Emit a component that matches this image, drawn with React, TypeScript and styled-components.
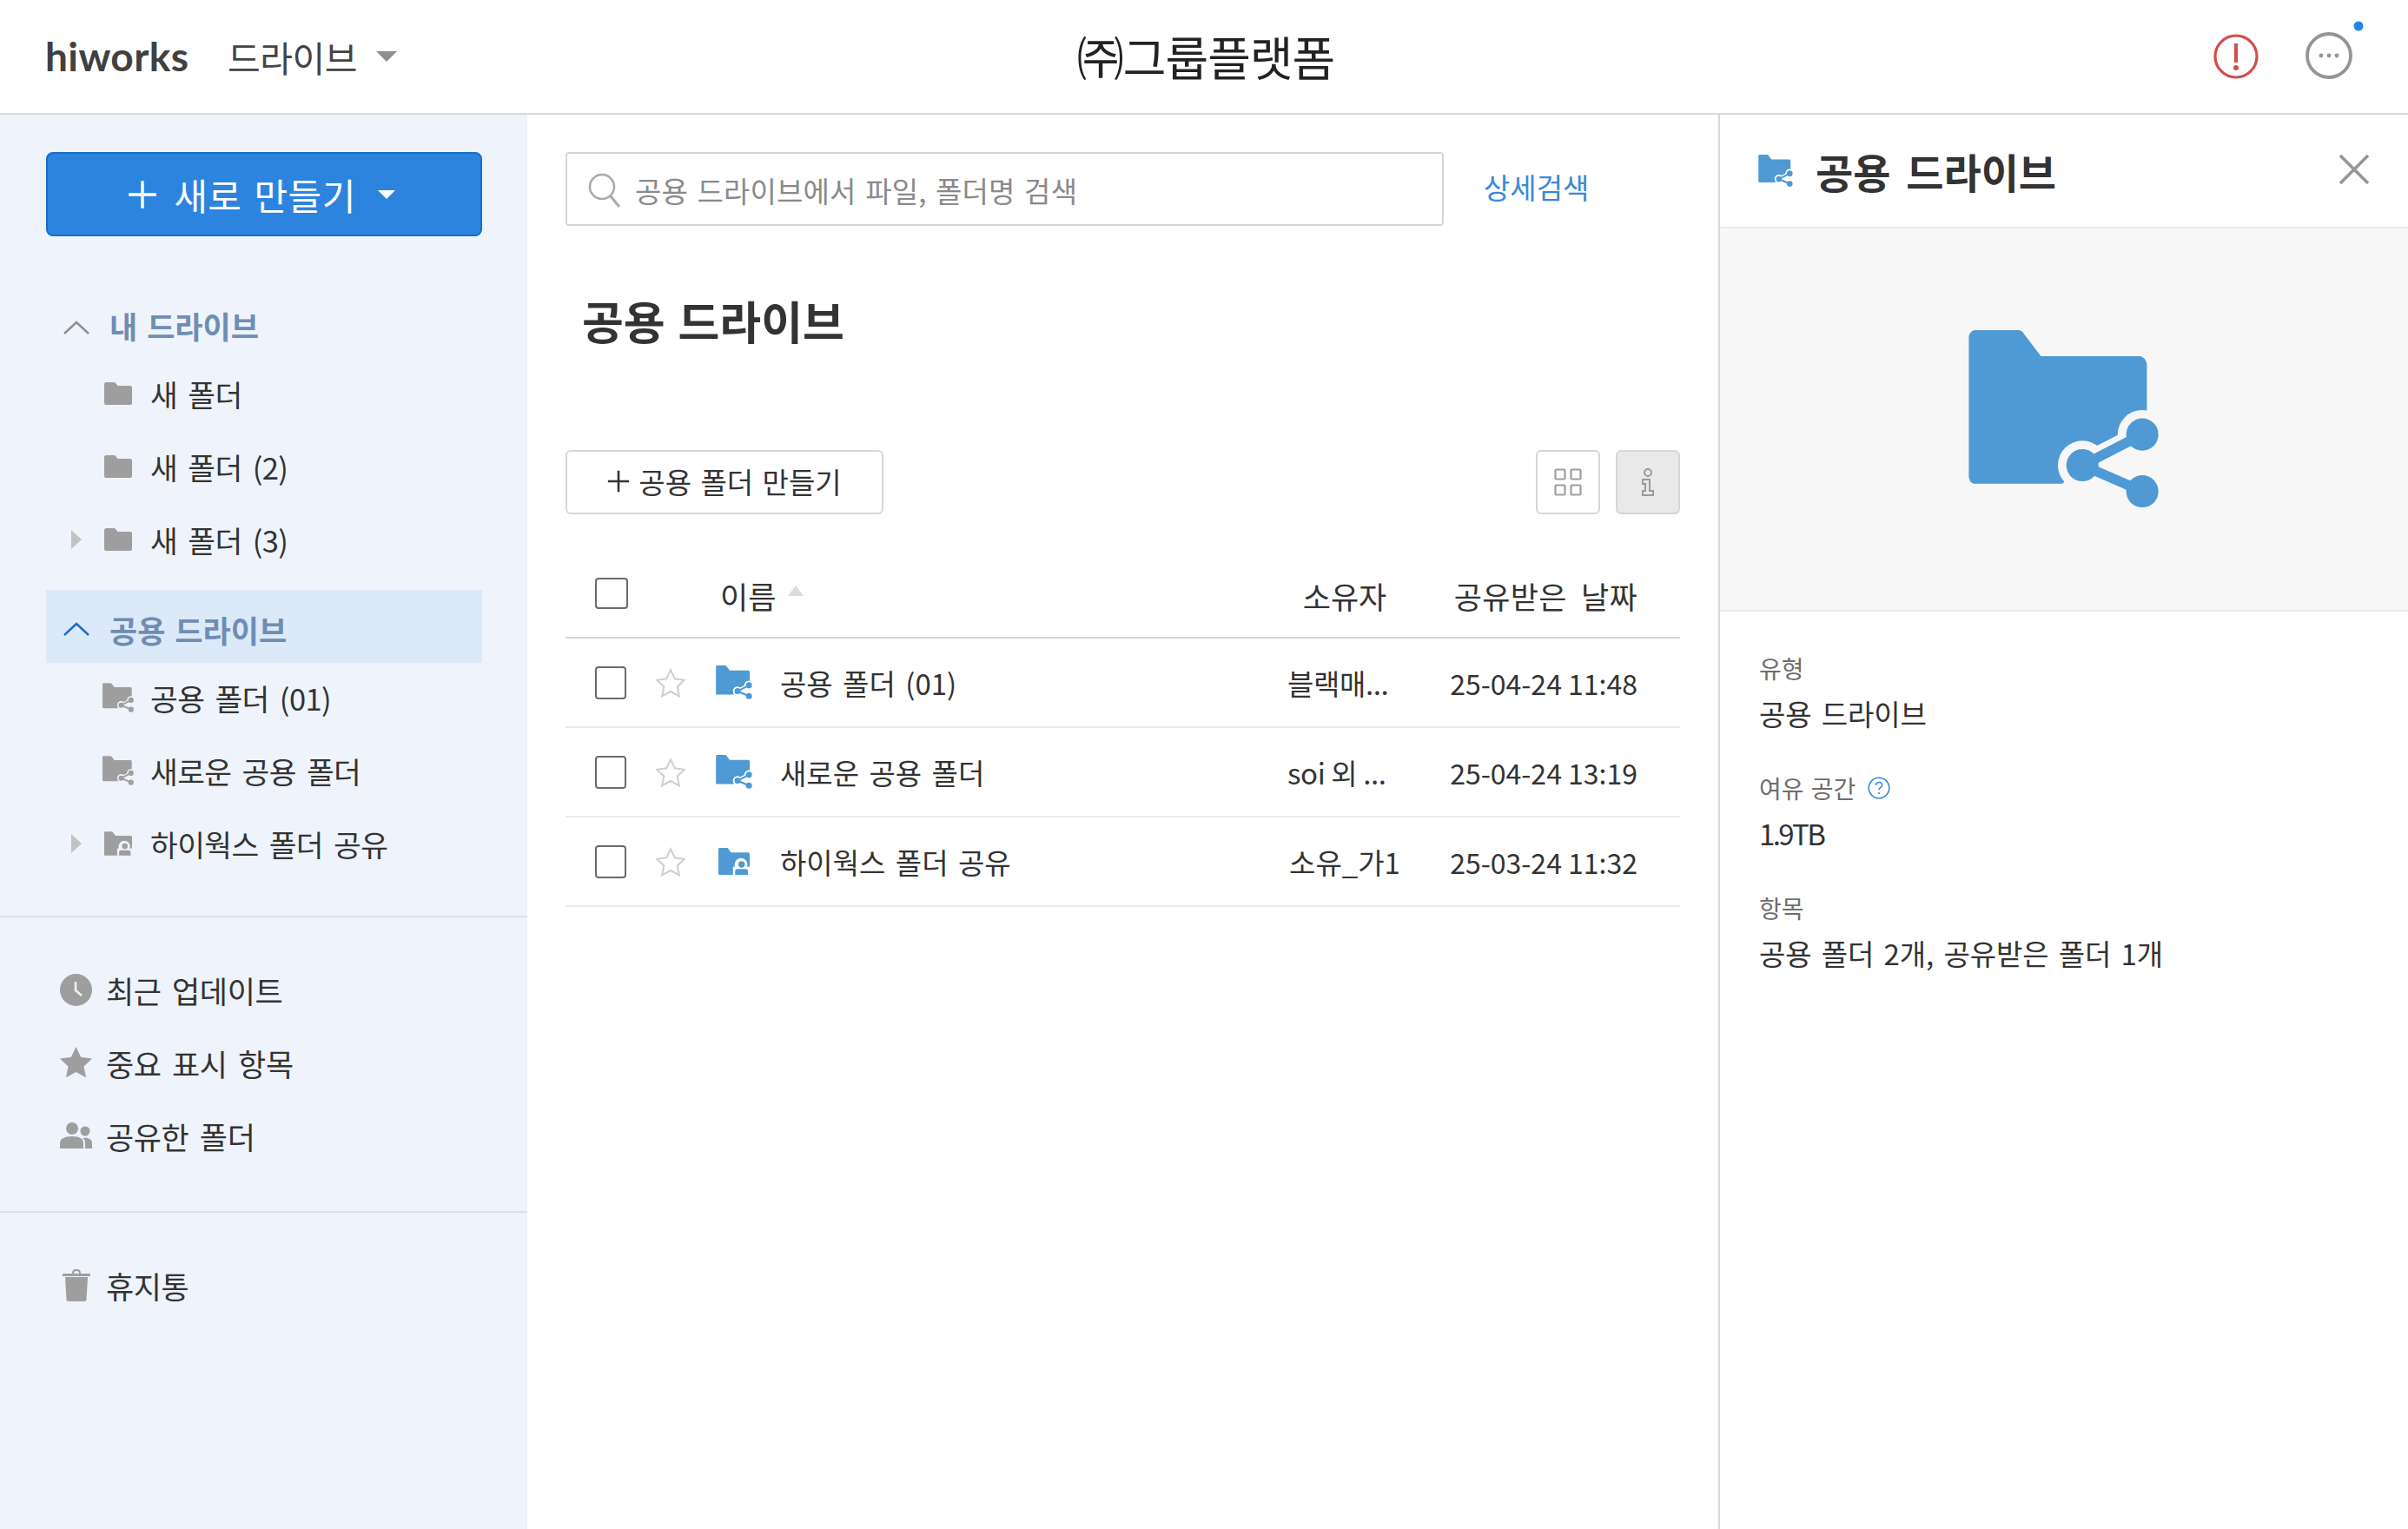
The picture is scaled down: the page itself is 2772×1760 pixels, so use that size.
import React from 'react';
import styled, { createGlobalStyle } from 'styled-components';

const GlobalStyle = createGlobalStyle`
  html, body {
    margin: 0;
    padding: 0;
    background: #fff;
  }
  * {
    box-sizing: border-box;
  }
  body {
    font-family: 'Noto Sans CJK KR', 'Noto Sans', sans-serif;
    color: #333;
  }
`;

const Page = styled.div`
  width: 2772px;
  height: 1760px;
  display: flex;
  flex-direction: column;
  overflow: hidden;
`;

const Header = styled.header`
  height: 132px;
  flex: none;
  border-bottom: 2px solid #d8d8d8;
  display: grid;
  grid-template-columns: 1fr auto 1fr;
  align-items: center;
  padding: 0 48px 0 52px;
`;

const HeaderLeft = styled.div`
  display: flex;
  align-items: center;
`;

const Logo = styled.span`
  font-family: Lato, 'Noto Sans', sans-serif;
  font-weight: 700;
  font-size: 46px;
  letter-spacing: 0.4px;
  color: #404040;
  width: 210px;
  line-height: 1;
`;

const AppName = styled.span`
  font-size: 41px;
  color: #444;
  letter-spacing: -0.5px;
`;

const Caret = styled.i<{ $color: string; $w: number; $gap: number }>`
  display: block;
  width: 0;
  height: 0;
  margin-left: ${(p) => p.$gap}px;
  border-left: ${(p) => p.$w}px solid transparent;
  border-right: ${(p) => p.$w}px solid transparent;
  border-top: ${(p) => p.$w}px solid ${(p) => p.$color};
`;

const Company = styled.h1`
  margin: -2px 0 0;
  font-size: 54px;
  font-weight: 400;
  color: #222;
  letter-spacing: -1px;
`;

const HeaderRight = styled.div`
  display: flex;
  justify-content: flex-end;
  align-items: center;
  gap: 54px;
`;

const Body = styled.div`
  flex: 1;
  display: flex;
  min-height: 0;
`;

const Sidebar = styled.aside`
  width: 607px;
  flex: none;
  background: #eef3fc;
  padding-top: 43px;
`;

const SidePad = styled.div`
  padding: 0 52px 0 53px;
`;

const NewButton = styled.button`
  width: 502px;
  height: 97px;
  background: #2c84de;
  border: 2px solid #1a6dc4;
  border-radius: 8px;
  color: #fff;
  font-family: inherit;
  font-size: 42px;
  letter-spacing: 0.5px;
  word-spacing: 4px;
  display: flex;
  align-items: center;
  justify-content: center;
  gap: 19px;
  padding: 0 6px 0 0;
`;

const Tree = styled.div`
  margin-top: 60px;
`;

const DriveHead = styled.div<{ $active?: boolean }>`
  height: 84px;
  display: flex;
  align-items: center;
  padding: 6px 0 0 19px;
  gap: 22px;
  background: ${(p) => (p.$active ? '#dce9f9' : 'transparent')};
  margin: ${(p) => (p.$active ? '16px 0 -2px' : '0 0 -5px')};
`;

const DriveLabel = styled.span`
  font-size: 35px;
  font-weight: 700;
  color: #6f8db2;
  word-spacing: 3px;
  margin-top: -6px;
`;

const ActiveLabel = styled(DriveLabel)`
  margin-top: 0;
`;

const TreeRow = styled.div`
  height: 84px;
  display: flex;
  align-items: center;
  position: relative;
  padding-left: 65px;
`;

const Expander = styled.i`
  position: absolute;
  left: 29px;
  top: 31px;
  width: 0;
  height: 0;
  border-top: 11px solid transparent;
  border-bottom: 11px solid transparent;
  border-left: 12px solid #c3c3c3;
`;

const TreeIcon = styled.span`
  width: 36px;
  display: flex;
  justify-content: center;
  flex: none;
`;

const TreeLabel = styled.span`
  font-size: 34.5px;
  color: #333;
  margin-left: 19px;
  word-spacing: 5px;
  letter-spacing: -0.6px;
`;

const Divider = styled.hr<{ $top: number }>`
  border: 0;
  border-top: 2px solid #dde2ea;
  margin: ${(p) => p.$top}px 0 0;
`;

const LinkList = styled.div`
  padding: 41px 0 0 69px;
  margin-bottom: 45px;
`;

const LinkRow = styled.div`
  height: 84px;
  display: flex;
  align-items: center;
  gap: 16px;
`;

const LinkIcon = styled.span`
  width: 37px;
  display: flex;
  justify-content: center;
  flex: none;
`;

const LinkLabel = styled.span`
  font-size: 35px;
  color: #333;
  word-spacing: 5px;
  letter-spacing: -0.4px;
`;

const Main = styled.main`
  flex: 1;
  padding: 43px 45px 0 44px;
  min-width: 0;
`;

const SearchRow = styled.div`
  display: flex;
  align-items: center;
  gap: 46px;
`;

const SearchBox = styled.div`
  width: 1011px;
  height: 85px;
  border: 2px solid #d6d6d6;
  border-radius: 4px;
  display: flex;
  align-items: center;
  padding: 2px 0 0 24px;
  gap: 16px;
  font-size: 33px;
  color: #8a8a8a;
  word-spacing: 3px;
  letter-spacing: 0.15px;
`;

const DetailLink = styled.a`
  font-size: 33px;
  color: #3a88d8;
  margin-top: -6px;
`;

const PageTitle = styled.h2`
  margin: 74px 0 0 19px;
  font-size: 52px;
  line-height: 70px;
  font-weight: 700;
  color: #333;
  word-spacing: 3px;
`;

const Toolbar = styled.div`
  display: flex;
  align-items: center;
  margin-top: 114px;
  gap: 18px;
`;

const OutlineButton = styled.button`
  width: 366px;
  height: 74px;
  border: 2px solid #d6d6d6;
  border-radius: 6px;
  background: #fff;
  font-family: inherit;
  font-size: 33px;
  color: #333;
  display: flex;
  align-items: center;
  justify-content: center;
  gap: 10px;
  word-spacing: 3px;
  margin-right: auto;
  padding: 0 0 3px;
`;

const SquareButton = styled.button<{ $on?: boolean }>`
  width: 74px;
  height: 74px;
  border: 2px solid #d6d6d6;
  border-radius: 6px;
  background: ${(p) => (p.$on ? '#e9e9e9' : '#fff')};
  padding: 0;
  display: flex;
  align-items: center;
  justify-content: center;
`;

const Table = styled.div`
  margin-top: 55px;
`;

const Row = styled.div<{ $head?: boolean }>`
  display: grid;
  grid-template-columns: 34px 36px 26px 48px 29px 42px 595px 174px 1fr;
  align-items: center;
  height: ${(p) => (p.$head ? '88px' : '103px')};
  padding-bottom: ${(p) => (p.$head ? '10px' : '0')};
  border-bottom: 2px solid ${(p) => (p.$head ? '#d4d4d4' : '#ebebeb')};
  font-size: ${(p) => (p.$head ? '35px' : '33px')};
  color: #333;
`;

const Box = styled.span<{ $head?: boolean }>`
  grid-column: 2;
  width: ${(p) => (p.$head ? '38px' : '36px')};
  height: ${(p) => (p.$head ? '36px' : '38px')};
  margin-top: ${(p) => (p.$head ? '-4px' : '0')};
  border: 2px solid #6b6b6b;
  border-radius: 4px;
  background: #fff;
`;

const StarCell = styled.span`
  grid-column: 4;
  display: flex;
  justify-content: center;
  padding-left: 2px;
`;

const FolderCell = styled.span`
  grid-column: 6;
  display: flex;
  justify-content: center;
`;

const NameCell = styled.span`
  padding-left: 32px;
  word-spacing: 4px;
  white-space: nowrap;
`;

const HeadName = styled.span`
  grid-column: 5 / 8;
  display: flex;
  align-items: center;
  gap: 14px;
  padding-left: 34px;
`;

const SortUp = styled.i`
  display: block;
  width: 0;
  height: 0;
  border-left: 9px solid transparent;
  border-right: 9px solid transparent;
  border-bottom: 12px solid #dcdcdc;
  margin-top: -10px;
`;

// names that were cut off with ... start at the left of the cell, the rest are centred
const OwnerCell = styled.span<{ $clipped?: boolean }>`
  grid-column: 8;
  text-align: ${(p) => (p.$clipped ? 'left' : 'center')};
  padding-left: ${(p) => (p.$clipped ? '21px' : '0')};
  letter-spacing: ${(p) => (p.$clipped ? '-0.4px' : '0')};
  white-space: nowrap;
`;

const DateCell = styled.span`
  grid-column: 9;
  text-align: right;
  padding-right: 49px;
  white-space: nowrap;
  font-size: 32px;
`;

const DateHead = styled(DateCell)`
  font-size: 35px;
  word-spacing: 8px;
  letter-spacing: 0.3px;
`;

const Panel = styled.section`
  width: 794px;
  flex: none;
  border-left: 2px solid #d8d8d8;
  margin-left: -1px;
`;

const PanelHead = styled.div`
  height: 131px;
  display: flex;
  align-items: center;
  padding: 0 44px 0 44px;
  gap: 26px;
  border-bottom: 2px solid #ececec;
`;

const PanelTitle = styled.h3`
  margin: 0;
  flex: 1;
  font-size: 47px;
  font-weight: 700;
  color: #333;
  word-spacing: 7px;
`;

const CloseWrap = styled.span`
  margin-top: -4px;
`;

const Preview = styled.div`
  height: 441px;
  background: #f7f7f7;
  border-bottom: 2px solid #ececec;
  display: flex;
  align-items: center;
  justify-content: center;
`;

const InfoList = styled.dl`
  margin: 39px 0 0;
  padding-left: 45px;
`;

const InfoKey = styled.dt`
  font-size: 28px;
  line-height: 52px;
  color: #6e6e6e;
  display: flex;
  align-items: center;
  gap: 14px;
  word-spacing: 2px;
`;

const InfoValue = styled.dd<{ $tight?: boolean }>`
  margin: 0 0 34px;
  font-size: 33px;
  line-height: 52px;
  color: #333;
  word-spacing: 4px;
  letter-spacing: ${(p) => (p.$tight ? '-2.6px' : '-0.1px')};
`;

const Glyph = styled.svg`
  display: block;
  flex: none;
`;

const PlusIcon = ({ size, stroke, color }: { size: number; stroke: number; color: string }) => (
  <Glyph width={size} height={size} viewBox="0 0 30 30">
    <path d="M15 1v28M1 15h28" stroke={color} strokeWidth={stroke} fill="none" />
  </Glyph>
);

const Chevron = ({ color }: { color: string }) => (
  <Glyph width={32} height={18} viewBox="0 0 32 18">
    <path d="M2 16 16 3l14 13" stroke={color} strokeWidth="2.4" fill="none" />
  </Glyph>
);

const folderPath = 'M4 0h28c2 0 3 1 4 2.500L47 17h64c3 0 5 3 5 6v77H4c-2 0-4-2-4-5V5c0-3 2-5 4-5z';

// folder with the share mark cut out of its corner, cut = colour behind the icon
const FolderShare = ({ w, h, color, cut }: { w: number; h: number; color: string; cut: string }) => (
  <Glyph width={w} height={h} viewBox="0 0 124 116">
    <path d={folderPath} fill={color} />
    <path d="M74 88 113 69h11v47H61v-16z" fill={cut} />
    <circle cx="113" cy="68" r="16" fill={cut} />
    <circle cx="74" cy="88" r="16" fill={cut} />
    <path d="M74 88 113 68" stroke={cut} strokeWidth="14" />
    <path d="M113 68 74 88l39 17" stroke={color} strokeWidth="6.500" fill="none" />
    <circle cx="113" cy="68" r="10.500" fill={color} />
    <circle cx="74" cy="88" r="10.500" fill={color} />
    <circle cx="113" cy="105" r="10.500" fill={color} />
  </Glyph>
);

const FolderUser = ({ w, h, color, cut }: { w: number; h: number; color: string; cut: string }) => (
  <Glyph width={w} height={h} viewBox="0 0 116 100">
    <path d={folderPath} fill={color} />
    <circle cx="84" cy="62" r="24" fill={cut} />
    <rect x="54" y="70" width="62" height="30" fill={cut} />
    <circle cx="86" cy="61" r="12" fill={color} />
    <path d="M62 100V86c0-5 4-8 9-8h30c5 0 9 3 9 8v14z" fill={color} />
  </Glyph>
);

const PlainFolder = () => (
  <Glyph width={32} height={26} viewBox="0 0 32 26">
    <path d="M2 0h9c1 0 1.500.3 2 1l2.500 3H30c1 0 2 1 2 2v18c0 1-1 2-2 2H2c-1 0-2-1-2-2V2C0 1 1 0 2 0z" fill="#9e9e9e" />
  </Glyph>
);

const ClockIcon = () => (
  <Glyph width={37} height={37} viewBox="0 0 37 37">
    <circle cx="18.500" cy="18.500" r="18.500" fill="#9e9e9e" />
    <path d="M18 9v10l7 6" stroke="#eef3fc" strokeWidth="2.500" fill="none" />
  </Glyph>
);

const StarFill = () => (
  <Glyph width={37} height={36} viewBox="0 0 37 36">
    <path d="M18.500 0l5.600 11.800 12.900 1.700-9.500 8.900 2.500 12.800-11.500-6.300L7 35.200l2.500-12.800L0 13.500l12.900-1.700z" fill="#9e9e9e" />
  </Glyph>
);

const PeopleIcon = () => (
  <Glyph width={37} height={30} viewBox="0 0 37 30">
    <circle cx="14" cy="7" r="7" fill="#9e9e9e" />
    <circle cx="29" cy="10" r="5.500" fill="#9e9e9e" />
    <path d="M0 30v-6c0-5 5-8 14-8s13 3 13 8v6z" fill="#9e9e9e" />
    <path d="M29 30v-7c0-2-1-4-3-5 6-1 11 1 11 6v6z" fill="#9e9e9e" />
  </Glyph>
);

const TrashIcon = () => (
  <Glyph width={32} height={37} viewBox="0 0 32 37">
    <path d="M0 5h32v3H0zM11 5c0-3 1-5 5-5s5 2 5 5h-2c0-2-1-3-3-3s-3 1-3 3z" fill="#9e9e9e" />
    <path d="M3 9h26l-1.500 26c0 1-1 2-2 2h-19c-1 0-2-1-2-2z" fill="#9e9e9e" />
  </Glyph>
);

const AlertIcon = () => (
  <Glyph width={52} height={52} viewBox="0 0 52 52">
    <circle cx="26" cy="26" r="24" fill="none" stroke="#d24c4c" strokeWidth="3.200" />
    <path d="M26 11v22" stroke="#d24c4c" strokeWidth="4" />
    <circle cx="26" cy="39" r="3" fill="#d24c4c" />
  </Glyph>
);

const MoreIcon = () => (
  <Glyph width={70} height={70} viewBox="0 0 70 70" style={{ marginTop: -14 }}>
    <circle cx="27" cy="41" r="25" fill="none" stroke="#949494" strokeWidth="3.800" />
    <circle cx="18" cy="41" r="2.400" fill="#949494" />
    <circle cx="27" cy="41" r="2.400" fill="#949494" />
    <circle cx="36" cy="41" r="2.400" fill="#949494" />
    <circle cx="61" cy="7" r="5.500" fill="#1f86e6" />
  </Glyph>
);

const SearchIcon = () => (
  <Glyph width={38} height={40} viewBox="0 0 38 40">
    <circle cx="16" cy="16" r="14" fill="none" stroke="#aaa" strokeWidth="2.600" />
    <path d="M26 27l10 12" stroke="#aaa" strokeWidth="3" fill="none" />
  </Glyph>
);

const GridIcon = () => (
  <Glyph width={32} height={32} viewBox="0 0 32 32">
    <g fill="none" stroke="#a0a0a0" strokeWidth="2.200">
      <rect x="1.500" y="1.500" width="11" height="11" rx="1" />
      <rect x="19.500" y="1.500" width="11" height="11" rx="1" />
      <rect x="1.500" y="19.500" width="11" height="11" rx="1" />
      <rect x="19.500" y="19.500" width="11" height="11" rx="1" />
    </g>
  </Glyph>
);

const InfoIcon = () => (
  <Glyph width={16} height={32} viewBox="0 0 16 32">
    <g fill="none" stroke="#9a9a9a" strokeWidth="2">
      <circle cx="8" cy="5" r="4" />
      <path d="M2 13h8v13h4v5H2v-5h3v-8H2z" />
    </g>
  </Glyph>
);

const StarOutline = () => (
  <Glyph width={34} height={34} viewBox="0 0 37 36">
    <path d="M18.500 2l5.200 10.900 12 1.600-8.800 8.300 2.300 11.900-10.700-5.800-10.700 5.800 2.300-11.900-8.800-8.300 12-1.600z" fill="none" stroke="#cfcfcf" strokeWidth="2.200" />
  </Glyph>
);

const CloseIcon = () => (
  <Glyph width={36} height={36} viewBox="0 0 36 36">
    <path d="M2 2l32 32M34 2 2 34" stroke="#969696" strokeWidth="3.600" fill="none" />
  </Glyph>
);

const HelpIcon = () => (
  <Glyph width={26} height={26} viewBox="0 0 26 26">
    <circle cx="13" cy="13" r="11.800" fill="none" stroke="#3a88d8" strokeWidth="1.600" />
    <path d="M9.500 10c0-2.200 1.600-3.500 3.600-3.500s3.500 1.300 3.500 3.200c0 2.700-3.600 2.700-3.600 5.600" fill="none" stroke="#3a88d8" strokeWidth="1.600" />
    <circle cx="13" cy="19" r="1.100" fill="#3a88d8" />
  </Glyph>
);

const rows = [
  { name: '공용 폴더 (01)', owner: '블랙매...', date: '25-04-24 11:48', shared: true, clipped: true },
  { name: '새로운 공용 폴더', owner: 'soi 외 ...', date: '25-04-24 13:19', shared: true, clipped: true },
  { name: '하이웍스 폴더 공유', owner: '소유_가1', date: '25-03-24 11:32', shared: false, clipped: false },
];

const App = () => {
  return (
    <>
      <GlobalStyle />
      <Page>
        <Header>
          <HeaderLeft>
            <Logo>hiworks</Logo>
            <AppName>드라이브</AppName>
            <Caret $color="#8f8f8f" $w={12} $gap={22} />
          </HeaderLeft>
          <Company>㈜그룹플랫폼</Company>
          <HeaderRight>
            <AlertIcon />
            <MoreIcon />
          </HeaderRight>
        </Header>
        <Body>
          <Sidebar>
            <SidePad>
              <NewButton>
                <PlusIcon size={34} stroke={3} color="#fff" />
                새로 만들기
                <Caret $color="#fff" $w={10} $gap={6} />
              </NewButton>
              <Tree>
                <DriveHead>
                  <Chevron color="#8f8f8f" />
                  <DriveLabel>내 드라이브</DriveLabel>
                </DriveHead>
                <TreeRow>
                  <TreeIcon><PlainFolder /></TreeIcon>
                  <TreeLabel>새 폴더</TreeLabel>
                </TreeRow>
                <TreeRow>
                  <TreeIcon><PlainFolder /></TreeIcon>
                  <TreeLabel>새 폴더 (2)</TreeLabel>
                </TreeRow>
                <TreeRow>
                  <Expander />
                  <TreeIcon><PlainFolder /></TreeIcon>
                  <TreeLabel>새 폴더 (3)</TreeLabel>
                </TreeRow>
                <DriveHead $active>
                  <Chevron color="#1a6dc4" />
                  <ActiveLabel>공용 드라이브</ActiveLabel>
                </DriveHead>
                <TreeRow>
                  <TreeIcon><FolderShare w={36} h={34} color="#9e9e9e" cut="#eef3fc" /></TreeIcon>
                  <TreeLabel>공용 폴더 (01)</TreeLabel>
                </TreeRow>
                <TreeRow>
                  <TreeIcon><FolderShare w={36} h={34} color="#9e9e9e" cut="#eef3fc" /></TreeIcon>
                  <TreeLabel>새로운 공용 폴더</TreeLabel>
                </TreeRow>
                <TreeRow>
                  <Expander />
                  <TreeIcon><FolderUser w={32} h={28} color="#9e9e9e" cut="#eef3fc" /></TreeIcon>
                  <TreeLabel>하이웍스 폴더 공유</TreeLabel>
                </TreeRow>
              </Tree>
            </SidePad>
            <Divider $top={41} />
            <LinkList>
              <LinkRow>
                <LinkIcon><ClockIcon /></LinkIcon>
                <LinkLabel>최근 업데이트</LinkLabel>
              </LinkRow>
              <LinkRow>
                <LinkIcon><StarFill /></LinkIcon>
                <LinkLabel>중요 표시 항목</LinkLabel>
              </LinkRow>
              <LinkRow>
                <LinkIcon><PeopleIcon /></LinkIcon>
                <LinkLabel>공유한 폴더</LinkLabel>
              </LinkRow>
            </LinkList>
            <Divider $top={0} />
            <LinkList>
              <LinkRow>
                <LinkIcon><TrashIcon /></LinkIcon>
                <LinkLabel>휴지통</LinkLabel>
              </LinkRow>
            </LinkList>
          </Sidebar>
          <Main>
            <SearchRow>
              <SearchBox>
                <SearchIcon />
                공용 드라이브에서 파일, 폴더명 검색
              </SearchBox>
              <DetailLink>상세검색</DetailLink>
            </SearchRow>
            <PageTitle>공용 드라이브</PageTitle>
            <Toolbar>
              <OutlineButton>
                <PlusIcon size={26} stroke={3} color="#333" />
                공용 폴더 만들기
              </OutlineButton>
              <SquareButton>
                <GridIcon />
              </SquareButton>
              <SquareButton $on>
                <InfoIcon />
              </SquareButton>
            </Toolbar>
            <Table>
              <Row $head>
                <Box $head />
                <HeadName>이름<SortUp /></HeadName>
                <OwnerCell>소유자</OwnerCell>
                <DateHead>공유받은 날짜</DateHead>
              </Row>
              {rows.map((row) => (
                <Row key={row.name}>
                  <Box />
                  <StarCell>
                    <StarOutline />
                  </StarCell>
                  <FolderCell>
                    {row.shared ? (
                      <FolderShare w={42} h={39} color="#4f9ad4" cut="#fff" />
                    ) : (
                      <FolderUser w={36} h={31} color="#4f9ad4" cut="#fff" />
                    )}
                  </FolderCell>
                  <NameCell>{row.name}</NameCell>
                  <OwnerCell $clipped={row.clipped}>{row.owner}</OwnerCell>
                  <DateCell>{row.date}</DateCell>
                </Row>
              ))}
            </Table>
          </Main>
          <Panel>
            <PanelHead>
              <FolderShare w={40} h={37} color="#4f9ad4" cut="#fff" />
              <PanelTitle>공용 드라이브</PanelTitle>
              <CloseWrap><CloseIcon /></CloseWrap>
            </PanelHead>
            <Preview>
              <FolderShare w={220} h={205} color="#4f9ad4" cut="#f7f7f7" />
            </Preview>
            <InfoList>
              <InfoKey>유형</InfoKey>
              <InfoValue>공용 드라이브</InfoValue>
              <InfoKey>여유 공간 <HelpIcon /></InfoKey>
              <InfoValue $tight>1.9TB</InfoValue>
              <InfoKey>항목</InfoKey>
              <InfoValue>공용 폴더 2개, 공유받은 폴더 1개</InfoValue>
            </InfoList>
          </Panel>
        </Body>
      </Page>
    </>
  );
};

export default App;
